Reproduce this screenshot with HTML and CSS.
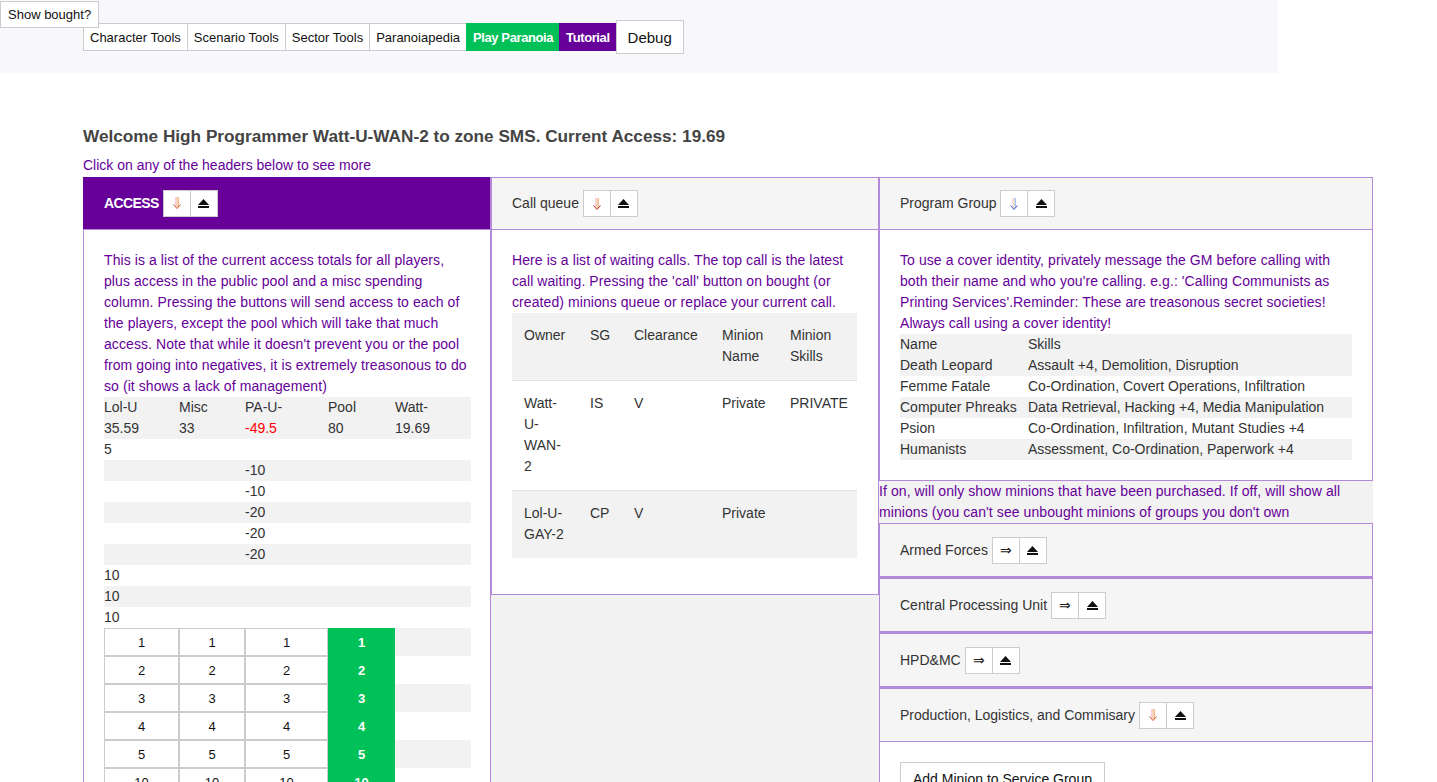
FILE: index.html
```html
<!DOCTYPE html>
<html lang="en">
<head>
  <meta charset="UTF-8">
  <title>Paranoia - SMS</title>
  <link rel="stylesheet" href="styles.css">
</head>
<body>
  <svg class="defs" width="0" height="0" aria-hidden="true">
    <defs>
      <linearGradient id="warm" x1="0" y1="0" x2="1" y2="0">
        <stop offset="0" stop-color="#f29ac0"/>
        <stop offset="0.5" stop-color="#f4c25a"/>
        <stop offset="1" stop-color="#e8743a"/>
      </linearGradient>
      <linearGradient id="cool" x1="0" y1="0" x2="1" y2="0">
        <stop offset="0" stop-color="#f0b4d8"/>
        <stop offset="0.5" stop-color="#f2d070"/>
        <stop offset="1" stop-color="#4f86f0"/>
      </linearGradient>
    </defs>
  </svg>

  <button class="show-bought">Show bought?</button>

  <div class="topbar">
    <nav class="nav">
      <button class="nav-btn">Character Tools</button>
      <button class="nav-btn">Scenario Tools</button>
      <button class="nav-btn">Sector Tools</button>
      <button class="nav-btn">Paranoiapedia</button>
      <button class="nav-btn play">Play Paranoia</button>
      <button class="nav-btn tutorial">Tutorial</button>
      <button class="nav-btn debug">Debug</button>
    </nav>
  </div>

  <main class="main">
    <h2 class="welcome">Welcome High Programmer Watt-U-WAN-2 to zone SMS. Current Access: 19.69</h2>
    <p class="hint">Click on any of the headers below to see more</p>

    <div class="columns">
      <!-- access column -->
      <section class="panel">
        <div class="panel-head access-head">
          <span class="panel-title">ACCESS</span>
          <button class="icon-btn"><svg width="10" height="14" viewBox="0 0 10 14"><path d="M4 1v10M6 1v10" stroke="url(#warm)" fill="none"/><path d="M1.5 8.5L5 12.5L8.5 8.5" stroke="#d0521c" fill="none"/></svg></button>
          <button class="icon-btn"><svg width="11" height="9" viewBox="0 0 11 9"><path d="M0 6L5.5 0L11 6Z" fill="#111"/><rect x="0" y="7" width="11" height="2" fill="#111"/></svg></button>
        </div>
        <div class="panel-body">
          <p class="info">This is a list of the current access totals for all players, plus access in the public pool and a misc spending column. Pressing the buttons will send access to each of the players, except the pool which will take that much access. Note that while it doesn't prevent you or the pool from going into negatives, it is extremely treasonous to do so (it shows a lack of management)</p>
          <table class="access-table">
            <colgroup>
              <col style="width:75px"><col style="width:66px"><col style="width:83px"><col style="width:67px"><col style="width:76px">
            </colgroup>
            <tr><td>Lol-U<br>35.59</td><td>Misc<br>33</td><td>PA-U-<br><span class="neg">-49.5</span></td><td>Pool<br>80</td><td>Watt-<br>19.69</td></tr>
            <tr><td>5</td><td></td><td></td><td></td><td></td></tr>
            <tr><td></td><td></td><td>-10</td><td></td><td></td></tr>
            <tr><td></td><td></td><td>-10</td><td></td><td></td></tr>
            <tr><td></td><td></td><td>-20</td><td></td><td></td></tr>
            <tr><td></td><td></td><td>-20</td><td></td><td></td></tr>
            <tr><td></td><td></td><td>-20</td><td></td><td></td></tr>
            <tr><td>10</td><td></td><td></td><td></td><td></td></tr>
            <tr><td>10</td><td></td><td></td><td></td><td></td></tr>
            <tr><td>10</td><td></td><td></td><td></td><td></td></tr>
            <tr class="btn-row"><td><button class="amt">1</button></td><td><button class="amt">1</button></td><td><button class="amt">1</button></td><td><button class="amt pool">1</button></td><td></td></tr>
            <tr class="btn-row"><td><button class="amt">2</button></td><td><button class="amt">2</button></td><td><button class="amt">2</button></td><td><button class="amt pool">2</button></td><td></td></tr>
            <tr class="btn-row"><td><button class="amt">3</button></td><td><button class="amt">3</button></td><td><button class="amt">3</button></td><td><button class="amt pool">3</button></td><td></td></tr>
            <tr class="btn-row"><td><button class="amt">4</button></td><td><button class="amt">4</button></td><td><button class="amt">4</button></td><td><button class="amt pool">4</button></td><td></td></tr>
            <tr class="btn-row"><td><button class="amt">5</button></td><td><button class="amt">5</button></td><td><button class="amt">5</button></td><td><button class="amt pool">5</button></td><td></td></tr>
            <tr class="btn-row"><td><button class="amt">10</button></td><td><button class="amt">10</button></td><td><button class="amt">10</button></td><td><button class="amt pool">10</button></td><td></td></tr>
            <tr class="btn-row"><td><button class="amt">20</button></td><td><button class="amt">20</button></td><td><button class="amt">20</button></td><td><button class="amt pool">20</button></td><td></td></tr>
            <tr class="btn-row"><td><button class="amt">50</button></td><td><button class="amt">50</button></td><td><button class="amt">50</button></td><td><button class="amt pool">50</button></td><td></td></tr>
          </table>
        </div>
      </section>

      <!-- call queue column -->
      <section class="panel">
        <div class="panel-head">
          <span class="panel-title">Call queue</span>
          <button class="icon-btn"><svg width="10" height="14" viewBox="0 0 10 14"><path d="M4 1v10M6 1v10" stroke="url(#warm)" fill="none"/><path d="M1.5 8.5L5 12.5L8.5 8.5" stroke="#c8301c" fill="none"/></svg></button>
          <button class="icon-btn"><svg width="11" height="9" viewBox="0 0 11 9"><path d="M0 6L5.5 0L11 6Z" fill="#111"/><rect x="0" y="7" width="11" height="2" fill="#111"/></svg></button>
        </div>
        <div class="panel-body queue-body">
          <p class="info">Here is a list of waiting calls. The top call is the latest call waiting. Pressing the 'call' button on bought (or created) minions queue or replace your current call.</p>
          <table class="queue-table">
            <colgroup>
              <col style="width:66px"><col style="width:44px"><col style="width:88px"><col style="width:68px"><col style="width:79px">
            </colgroup>
            <tr><td>Owner</td><td>SG</td><td>Clearance</td><td>Minion Name</td><td>Minion Skills</td></tr>
            <tr><td>Watt-<wbr>U-<wbr>WAN-<wbr>2</td><td>IS</td><td>V</td><td>Private</td><td>PRIVATE</td></tr>
            <tr><td>Lol-U-<wbr>GAY-2</td><td>CP</td><td>V</td><td>Private</td><td></td></tr>
          </table>
        </div>
      </section>

      <!-- program group column -->
      <div class="stack">
        <section class="panel">
          <div class="panel-head">
            <span class="panel-title">Program Group</span>
            <button class="icon-btn"><svg width="10" height="14" viewBox="0 0 10 14"><path d="M4 1v10M6 1v10" stroke="url(#cool)" fill="none"/><path d="M1.5 8.5L5 12.5L8.5 8.5" stroke="#3f55c8" fill="none"/></svg></button>
            <button class="icon-btn"><svg width="11" height="9" viewBox="0 0 11 9"><path d="M0 6L5.5 0L11 6Z" fill="#111"/><rect x="0" y="7" width="11" height="2" fill="#111"/></svg></button>
          </div>
          <div class="panel-body">
            <p class="info">To use a cover identity, privately message the GM before calling with both their name and who you're calling. e.g.: 'Calling Communists as Printing Services'.Reminder: These are treasonous secret societies! Always call using a cover identity!</p>
            <table class="group-table">
              <colgroup><col style="width:128px"><col></colgroup>
              <tr class="head"><td>Name</td><td>Skills</td></tr>
              <tr><td>Death Leopard</td><td>Assault +4, Demolition, Disruption</td></tr>
              <tr><td>Femme Fatale</td><td>Co-Ordination, Covert Operations, Infiltration</td></tr>
              <tr><td>Computer Phreaks</td><td>Data Retrieval, Hacking +4, Media Manipulation</td></tr>
              <tr><td>Psion</td><td>Co-Ordination, Infiltration, Mutant Studies +4</td></tr>
              <tr><td>Humanists</td><td>Assessment, Co-Ordination, Paperwork +4</td></tr>
            </table>
          </div>
        </section>

        <p class="info bought-note">If on, will only show minions that have been purchased. If off, will show all minions (you can't see unbought minions of groups you don't own</p>

        <section class="panel group">
          <div class="panel-head">
            <span class="panel-title">Armed Forces</span>
            <button class="icon-btn">&rArr;</button>
            <button class="icon-btn"><svg width="11" height="9" viewBox="0 0 11 9"><path d="M0 6L5.5 0L11 6Z" fill="#111"/><rect x="0" y="7" width="11" height="2" fill="#111"/></svg></button>
          </div>
        </section>
        <section class="panel group">
          <div class="panel-head">
            <span class="panel-title">Central Processing Unit</span>
            <button class="icon-btn">&rArr;</button>
            <button class="icon-btn"><svg width="11" height="9" viewBox="0 0 11 9"><path d="M0 6L5.5 0L11 6Z" fill="#111"/><rect x="0" y="7" width="11" height="2" fill="#111"/></svg></button>
          </div>
        </section>
        <section class="panel group">
          <div class="panel-head">
            <span class="panel-title">HPD&amp;MC</span>
            <button class="icon-btn">&rArr;</button>
            <button class="icon-btn"><svg width="11" height="9" viewBox="0 0 11 9"><path d="M0 6L5.5 0L11 6Z" fill="#111"/><rect x="0" y="7" width="11" height="2" fill="#111"/></svg></button>
          </div>
        </section>
        <section class="panel group">
          <div class="panel-head">
            <span class="panel-title">Production, Logistics, and Commisary</span>
            <button class="icon-btn"><svg width="10" height="14" viewBox="0 0 10 14"><path d="M4 1v10M6 1v10" stroke="url(#warm)" fill="none"/><path d="M1.5 8.5L5 12.5L8.5 8.5" stroke="#d0521c" fill="none"/></svg></button>
            <button class="icon-btn"><svg width="11" height="9" viewBox="0 0 11 9"><path d="M0 6L5.5 0L11 6Z" fill="#111"/><rect x="0" y="7" width="11" height="2" fill="#111"/></svg></button>
          </div>
          <div class="panel-body">
            <button class="add-btn">Add Minion to Service Group</button>
          </div>
        </section>
      </div>
    </div>
  </main>
</body>
</html>
```

FILE: styles.css
```css
body {
  margin: 0;
  font-family: "Liberation Sans", Arial, sans-serif;
  font-size: 14px;
  line-height: 21px;
  color: #333;
  background-color: #fff;
}

button {
  font-family: inherit;
  cursor: pointer;
}

.defs {
  position: absolute;
}

/* floating toggle in the corner */
.show-bought {
  position: absolute;
  top: 1px;
  left: 0;
  height: 27px;
  padding: 0 7px;
  font-size: 13px;
  color: #111;
  background-color: #fff;
  border: 1px solid #ccc;
}

.topbar {
  width: 1278px;
  height: 73px;
  box-sizing: border-box;
  padding: 20px 0 0 83px;
  background-color: #f8f8fc;
}

.nav {
  display: flex;
  align-items: center;
}

.nav-btn {
  height: 28px;
  padding: 0 6px;
  font-size: 13px;
  color: #111;
  background-color: #fff;
  border: 1px solid #ccc;
  margin-right: -1px;
}

.nav-btn.play {
  background-color: #00c058;
  border-color: #00c058;
  color: #fff;
  font-weight: bold;
  letter-spacing: -0.4px;
}

.nav-btn.tutorial {
  background-color: #660099;
  border-color: #660099;
  color: #fff;
  font-weight: bold;
  letter-spacing: -0.4px;
}

.nav-btn.debug {
  height: 34px;
  padding: 0 11px;
  font-size: 15px;
}

.main {
  padding: 0 0 0 83px;
}

.welcome {
  margin: 52px 0 8px;
  font-size: 17.2px;
  line-height: 22px;
  color: #444;
}

.hint {
  margin: 0 0 1px;
  color: #660099;
}

.columns {
  display: grid;
  grid-template-columns: 408px 388px 494px;
  align-items: start;
  width: 1290px;
  background-color: #f2f2f2;
}

.panel {
  border: 1px solid #b28ad9;
  background-color: #fff;
}

.panel-head {
  display: flex;
  align-items: center;
  height: 51px;
  padding: 0 20px;
  background-color: #f5f5f5;
  border-bottom: 1px solid #b28ad9;
}

.panel-head.access-head {
  background-color: #660099;
  margin: -1px 0 0 -1px;
  padding-left: 21px;
  height: 52px;
}

.access-head .panel-title {
  color: #fff;
  font-weight: bold;
  letter-spacing: -0.6px;
}

.panel-title {
  margin-right: 4px;
}

.icon-btn {
  width: 28px;
  height: 27px;
  padding: 0;
  display: flex;
  align-items: center;
  justify-content: center;
  font-size: 14px;
  color: #222;
  background-color: #fff;
  border: 1px solid #ccc;
  margin-right: -1px;
}

.panel-body {
  padding: 20px;
}

.info {
  margin: 0;
  color: #660099;
  letter-spacing: 0.08px;
}

table {
  border-collapse: collapse;
  table-layout: fixed;
}

.access-table {
  width: 367px;
}

.access-table td {
  padding: 0;
  vertical-align: top;
}

.access-table tr:nth-child(odd) {
  background-color: #f2f2f2;
}

.neg {
  color: #f00;
}

.btn-row td {
  height: 28px;
}

.amt {
  display: block;
  width: 100%;
  height: 28px;
  font-size: 13px;
  color: #111;
  background-color: #fff;
  border: 1px solid #ccc;
}

.amt.pool {
  background-color: #00c058;
  border-color: #00c058;
  color: #fff;
  font-weight: bold;
}

.queue-body {
  padding-bottom: 36px;
}

.queue-table {
  width: 345px;
}

.queue-table td {
  padding: 12px 12px 13px;
  vertical-align: top;
  border-top: 1px solid #e2e2e2;
}

.queue-table tr:first-child td {
  border-top: none;
}

.queue-table tr:nth-child(odd) {
  background-color: #f2f2f2;
}

.group-table {
  width: 452px;
}

.group-table td {
  padding: 0;
  white-space: nowrap;
}

.group-table tr.head,
.group-table tr:nth-child(even) {
  background-color: #f2f2f2;
}

.bought-note {
  padding: 0;
}

.panel.group .panel-head {
  height: 52px;
}

.add-btn {
  height: 34px;
  padding: 0 12px;
  font-size: 14px;
  color: #111;
  background-color: #fff;
  border: 1px solid #ccc;
}
```
